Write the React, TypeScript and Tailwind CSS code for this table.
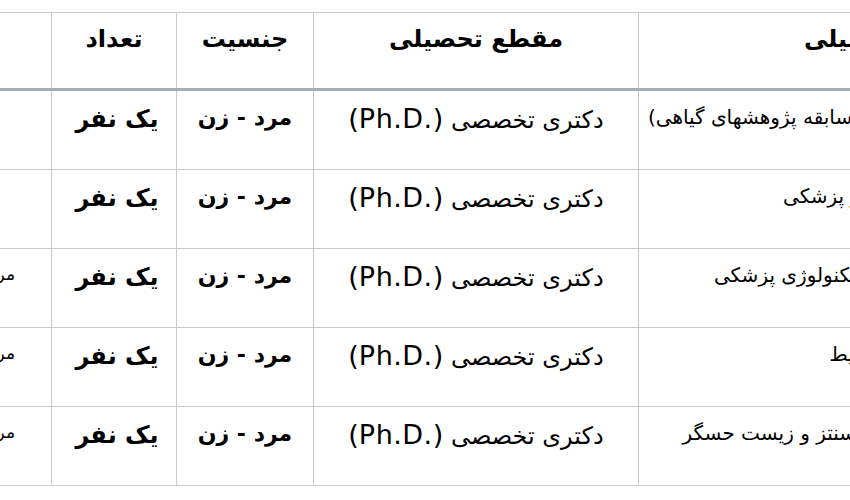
const rows = [
  { side: "", field: "(با سابقه پژوهشهای گیاهی)" },
  { side: "", field: "نانو پزشکی" },
  { side: "مربی پژوهشی", field: "بیوتکنولوژی پزشکی" },
  { side: "مربی پژوهشی", field: "محیط" },
  { side: "مربی پژوهشی", field: "بیوسنتز و زیست حسگر" },
];

const line = "border-[#c7cbd2]";

const App = () => {
  return (
    <div className="w-[850px] h-[500px] overflow-hidden bg-white pt-3 font-['DejaVu_Sans',sans-serif] text-black">
      <div className={`-ml-[149px] w-[1187px] border-t ${line}`}>
        {/* Header */}
        <div className="flex h-[78px] border-b-[3px] border-[#a8acb3]">
          <div className="w-[200px] shrink-0" />
          <div dir="rtl" className={`w-[125px] shrink-0 border-l ${line} pt-[8px] text-center text-[24px] font-bold`}>
            تعداد
          </div>
          <div dir="rtl" className={`w-[137px] shrink-0 border-l ${line} pt-[8px] text-center text-[24px] font-bold`}>
            جنسیت
          </div>
          <div dir="rtl" className={`w-[325px] shrink-0 border-l ${line} pt-[8px] text-center text-[24px] font-bold`}>
            مقطع تحصیلی
          </div>
          <div dir="rtl" className={`w-[400px] shrink-0 border-l ${line} pt-[8px] pr-[70px] text-right text-[24px] font-bold`}>
            رشته تحصیلی
          </div>
        </div>

        {/* Rows */}
        {rows.map((r, i) => (
          <div key={i} className={`flex h-[79px] border-b ${line}`}>
            <div dir="rtl" className="w-[200px] shrink-0 pt-[13px] pr-[36px] text-right text-[17px] whitespace-nowrap">
              {r.side}
            </div>
            <div dir="rtl" className={`w-[125px] shrink-0 border-l ${line} pt-[10px] pl-[6px] text-center text-[24px] font-bold`}>
              یک نفر
            </div>
            <div dir="rtl" className={`w-[137px] shrink-0 border-l ${line} pt-[10px] text-center text-[22px] font-bold`}>
              مرد - زن
            </div>
            <div dir="rtl" className={`w-[325px] shrink-0 border-l ${line} pt-[8px] text-center text-[24px]`}>
              دکتری تخصصی{" "}
              <span dir="ltr" className="text-[27px] tracking-[0.5px]">
                (Ph.D.)
              </span>
            </div>
            <div dir="rtl" className={`w-[400px] shrink-0 border-l ${line} pt-[11px] pr-[160px] text-right text-[20px] whitespace-nowrap`}>
              {r.field}
            </div>
          </div>
        ))}
      </div>
    </div>
  );
};

export default App;
